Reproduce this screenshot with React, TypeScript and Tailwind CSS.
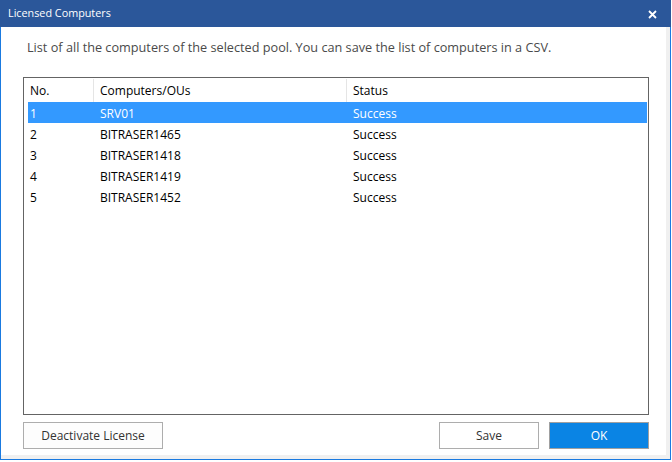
const rows = [
  { no: '1', name: 'SRV01', status: 'Success' },
  { no: '2', name: 'BITRASER1465', status: 'Success' },
  { no: '3', name: 'BITRASER1418', status: 'Success' },
  { no: '4', name: 'BITRASER1419', status: 'Success' },
  { no: '5', name: 'BITRASER1452', status: 'Success' },
];

export default function App() {
  return (
    <div
      className="w-[672px] h-[462px] bg-white overflow-hidden"
      style={{ fontFamily: '"Open Sans", "Noto Sans", sans-serif' }}
    >
      <div className="w-[671px] h-[460px] flex flex-col border border-t-0 border-[#1a7ae0] bg-white">
        {/* Title bar */}
        <div className="h-[27px] -mx-px bg-[#2b579a] flex items-center justify-between pl-[8px] pr-[14px] shrink-0">
          <span className="text-white text-[10.8px]">Licensed Computers</span>
          <svg width="9" height="9" viewBox="0 0 9 9" className="mt-px">
            <path d="M1 1 L8 8 M8 1 L1 8" stroke="white" strokeWidth="1.8" />
          </svg>
        </div>

        <div className="flex-1 flex flex-col border-r-[4px] border-b-[4px] border-[#f0f0f0]">
          <p className="text-[12.7px] text-[#4a4a4a] pl-[26px] pt-[11px] h-[50px]">
            List of all the computers of the selected pool. You can save the list of computers in a CSV.
          </p>

          {/* List */}
          <div className="ml-[22px] w-[626px] h-[338px] border border-[#646464] flex flex-col">
            <div className="h-[24px] flex text-[12px] text-black shrink-0 pt-px">
              <div className="w-[70px] pl-[6px] flex items-center border-r border-[#e5e5e5]">No.</div>
              <div className="w-[253px] pl-[6px] flex items-center border-r border-[#e5e5e5]">Computers/OUs</div>
              <div className="flex-1 pl-[6px] flex items-center">Status</div>
            </div>
            <div className="flex flex-col pl-[4px] pr-px">
              {rows.map((r, i) => (
                <div
                  key={r.no}
                  className={`h-[21px] pt-[2px] flex items-center text-[12px] ${i === 0 ? 'bg-[#3399ff] text-white' : 'text-black'}`}
                >
                  <div className="w-[72px] pl-[2px]">{r.no}</div>
                  <div className="w-[253px]">{r.name}</div>
                  <div className="flex-1">{r.status}</div>
                </div>
              ))}
            </div>
          </div>

          {/* Buttons */}
          <div className="flex items-center ml-[22px] w-[626px] mt-[7px] text-[12px]">
            <button className="w-[140px] h-[27px] border border-[#adadad] bg-[#fdfdfd] text-[#333]">
              Deactivate License
            </button>
            <div className="flex-1" />
            <button className="w-[100px] h-[27px] border border-[#adadad] bg-white text-[#333]">
              Save
            </button>
            <button className="w-[100px] h-[27px] ml-[10px] border border-[#a0a0a0] bg-[#0a84e4] text-white">
              OK
            </button>
          </div>
        </div>
      </div>
    </div>
  );
}
